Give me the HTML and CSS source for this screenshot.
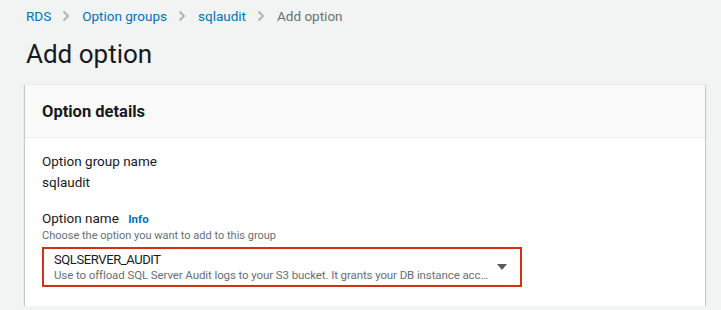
FILE: index.html
```html
<!DOCTYPE html>
<html lang="en">
<head>
    <meta charset="UTF-8">
    <title>Add option</title>
    <link rel="stylesheet" href="styles.css">
</head>
<body>
    <div class="page">
        <nav class="breadcrumbs">
            <a href="#">RDS</a>
            <span class="sep"><svg width="8" height="12" viewBox="0 0 8 12"><path d="M1.5 1.5 L6 6 L1.5 10.5" fill="none" stroke="#aab7b8" stroke-width="2"/></svg></span>
            <a href="#">Option groups</a>
            <span class="sep"><svg width="8" height="12" viewBox="0 0 8 12"><path d="M1.5 1.5 L6 6 L1.5 10.5" fill="none" stroke="#aab7b8" stroke-width="2"/></svg></span>
            <a href="#">sqlaudit</a>
            <span class="sep"><svg width="8" height="12" viewBox="0 0 8 12"><path d="M1.5 1.5 L6 6 L1.5 10.5" fill="none" stroke="#aab7b8" stroke-width="2"/></svg></span>
            <span class="current">Add option</span>
        </nav>

        <h1>Add option</h1>

        <div class="card">
            <div class="card-header">
                <h2>Option details</h2>
            </div>
            <div class="card-body">
                <div class="field">
                    <div class="label">Option group name</div>
                    <div class="value">sqlaudit</div>
                </div>
                <div class="field">
                    <div class="label">Option name <a href="#" class="info">Info</a></div>
                    <div class="hint">Choose the option you want to add to this group</div>
                    <div class="select">
                        <div class="select-text">
                            <div class="select-title">SQLSERVER_AUDIT</div>
                            <div class="select-desc">Use to offload SQL Server Audit logs to your S3 bucket. It grants your DB instance acc…</div>
                        </div>
                        <span class="caret"><svg width="12" height="8" viewBox="0 0 12 8"><path d="M1 1 H11 L6 7 Z" fill="#545b64"/></svg></span>
                    </div>
                </div>
            </div>
        </div>
    </div>
</body>
</html>
```

FILE: styles.css
```css
body, html {
    margin: 0;
    padding: 0;
    background-color: #f2f3f3;
    font-family: Roboto, "Noto Sans", sans-serif;
    color: #16191f;
}

.page {
    padding: 7px 16px 0 26px;
}

.breadcrumbs {
    display: flex;
    align-items: center;
    font-size: 13.5px;
    line-height: 18px;
}

.breadcrumbs a {
    color: #0073bb;
    text-decoration: none;
}

.breadcrumbs .sep {
    display: flex;
    margin: 0 12px 0 11px;
}

.breadcrumbs .current {
    color: #687078;
}

h1 {
    margin: 12px 0 0;
    font-size: 26px;
    font-weight: 400;
    line-height: 34px;
}

.card {
    margin: 13px 0 0 -1px;
    width: 680px;
    background: #fff;
    border-top: 1px solid #eaeded;
    box-shadow: 0 1px 1px 0 rgba(0, 28, 36, 0.3), 1px 1px 1px 0 rgba(0, 28, 36, 0.15), -1px 1px 1px 0 rgba(0, 28, 36, 0.15);
}

.card-header {
    background: #fafafa;
    border-bottom: 1px solid #eaeded;
    padding: 0 17px;
    height: 52px;
    display: flex;
    align-items: center;
}

.card-header h2 {
    margin: 0;
    font-size: 16.5px;
    font-weight: 700;
}

.card-body {
    padding: 13px 17px 19px 17px;
}

.field + .field {
    margin-top: 15px;
}

.label {
    font-size: 13.5px;
    line-height: 20px;
}

.value {
    font-size: 13.5px;
    line-height: 22px;
}

.info {
    margin-left: 6px;
    color: #0073bb;
    font-size: 11.5px;
    font-weight: 700;
    text-decoration: none;
}

.hint {
    font-size: 11px;
    line-height: 14px;
    color: #687078;
}

.select {
    margin-top: 4px;
    height: 36px;
    border: 2px solid #d13212;
    display: flex;
    align-items: center;
    padding: 0 12px 0 10px;
    box-sizing: content-box;
    width: 454px;
}

.select-text {
    flex: 1;
    min-width: 0;
}

.select-title {
    font-size: 13px;
    line-height: 17px;
    letter-spacing: -0.4px;
}

.select-desc {
    font-size: 11.5px;
    line-height: 15px;
    color: #687078;
    white-space: nowrap;
    letter-spacing: -0.1px;
}

.caret {
    display: flex;
    margin-left: 8px;
}
```
